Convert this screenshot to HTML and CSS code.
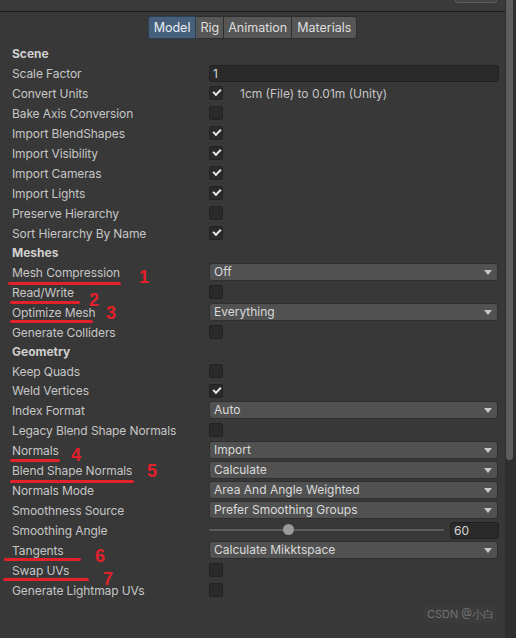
FILE: index.html
```html
<!DOCTYPE html>
<html>
<head>
<meta charset="utf-8">
<link rel="stylesheet" href="styles.css">
</head>
<body>
<div class="window">
  <div class="main">
    <div class="topbar"><div class="topbtn"></div></div>
    <div class="tabs">
      <div class="tab active">Model</div>
      <div class="tab">Rig</div>
      <div class="tab">Animation</div>
      <div class="tab">Materials</div>
    </div>
    <div class="list">
      <div class="hdr">Scene</div>
      <div class="row"><span class="lbl">Scale Factor</span><div class="field">1</div></div>
      <div class="row"><span class="lbl">Convert Units</span><div class="ctl"><span class="cb on"></span><span class="note">1cm (File) to 0.01m (Unity)</span></div></div>
      <div class="row"><span class="lbl">Bake Axis Conversion</span><div class="ctl"><span class="cb"></span></div></div>
      <div class="row"><span class="lbl">Import BlendShapes</span><div class="ctl"><span class="cb on"></span></div></div>
      <div class="row"><span class="lbl">Import Visibility</span><div class="ctl"><span class="cb on"></span></div></div>
      <div class="row"><span class="lbl">Import Cameras</span><div class="ctl"><span class="cb on"></span></div></div>
      <div class="row"><span class="lbl">Import Lights</span><div class="ctl"><span class="cb on"></span></div></div>
      <div class="row"><span class="lbl">Preserve Hierarchy</span><div class="ctl"><span class="cb"></span></div></div>
      <div class="row"><span class="lbl">Sort Hierarchy By Name</span><div class="ctl"><span class="cb on"></span></div></div>
      <div class="hdr">Meshes</div>
      <div class="row"><span class="lbl">Mesh Compression</span><div class="dd">Off</div></div>
      <div class="row"><span class="lbl">Read/Write</span><div class="ctl"><span class="cb"></span></div></div>
      <div class="row"><span class="lbl">Optimize Mesh</span><div class="dd">Everything</div></div>
      <div class="row"><span class="lbl">Generate Colliders</span><div class="ctl"><span class="cb"></span></div></div>
      <div class="hdr">Geometry</div>
      <div class="row"><span class="lbl">Keep Quads</span><div class="ctl"><span class="cb"></span></div></div>
      <div class="row short"><span class="lbl">Weld Vertices</span><div class="ctl"><span class="cb on"></span></div></div>
      <div class="row"><span class="lbl">Index Format</span><div class="dd">Auto</div></div>
      <div class="row"><span class="lbl">Legacy Blend Shape Normals</span><div class="ctl"><span class="cb"></span></div></div>
      <div class="row"><span class="lbl">Normals</span><div class="dd">Import</div></div>
      <div class="row"><span class="lbl">Blend Shape Normals</span><div class="dd">Calculate</div></div>
      <div class="row"><span class="lbl">Normals Mode</span><div class="dd">Area And Angle Weighted</div></div>
      <div class="row"><span class="lbl">Smoothness Source</span><div class="dd">Prefer Smoothing Groups</div></div>
      <div class="row"><span class="lbl">Smoothing Angle</span><div class="slider"><div class="track"><span class="thumb"></span></div><div class="num">60</div></div></div>
      <div class="row"><span class="lbl">Tangents</span><div class="dd">Calculate Mikktspace</div></div>
      <div class="row"><span class="lbl">Swap UVs</span><div class="ctl"><span class="cb"></span></div></div>
      <div class="row"><span class="lbl">Generate Lightmap UVs</span><div class="ctl"><span class="cb"></span></div></div>
    </div>
    <div class="wm">CSDN @小白</div>

    <span class="uline u1"></span><span class="num-r n1">1</span>
    <span class="uline u2"></span><span class="num-r n2">2</span>
    <span class="uline u3"></span><span class="num-r n3">3</span>
    <span class="uline u4"></span><span class="num-r n4">4</span>
    <span class="uline u5"></span><span class="num-r n5">5</span>
    <span class="uline u6"></span><span class="num-r n6">6</span>
    <span class="uline u7"></span><span class="num-r n7">7</span>
  </div>
  <div class="scroll"><div class="sthumb"></div></div>
</div>
</body>
</html>
```
FILE: styles.css
```css
html, body {
  margin: 0;
  padding: 0;
  background: #383838;
}
body {
  font-family: Inter, "Noto Sans", "Liberation Sans", sans-serif;
  font-size: 12px;
  color: #c8c8c8;
  width: 516px;
  height: 638px;
  overflow: hidden;
}
.window {
  display: flex;
  height: 638px;
}
.main {
  position: relative;
  flex: 1;
}
.topbar {
  height: 11px;
  border-bottom: 1px solid #1e1e1e;
  background: #3a3a3a;
  position: relative;
}
.topbtn {
  position: absolute;
  right: 8px;
  top: 0;
  width: 40px;
  height: 2px;
  border: 1px solid #5a5a5a;
  border-top: none;
  border-radius: 0 0 2px 2px;
  background: #444;
}
.tabs {
  display: flex;
  justify-content: center;
  margin-top: 4px;
}
.tab {
  height: 21px;
  line-height: 21px;
  padding: 0 4px;
  background: #565656;
  border: 1px solid #2e2e2e;
  border-left: none;
  color: #dedede;
  font-size: 12.5px;
}
.tab:first-child {
  border-left: 1px solid #2e2e2e;
  border-radius: 3px 0 0 3px;
  padding: 0 5px;
}
.tab:last-child {
  border-radius: 0 3px 3px 0;
  padding: 0 5px;
}
.tab.active {
  background: #46607c;
  border-color: #2d3f52;
  color: #e8eef5;
}
.list {
  padding-left: 12px;
  padding-top: 4px;
}
.hdr {
  height: 19px;
  line-height: 19px;
  font-weight: 700;
  color: #d0d0d0;
}
.list > .hdr:first-child {
  height: 20px;
  line-height: 21px;
}
.row {
  height: 20px;
  display: grid;
  grid-template-columns: 197px 290px;
  align-items: center;
}
.row.short { height: 19px; }
.lbl {
  color: #c6c6c6;
  white-space: nowrap;
  letter-spacing: -0.1px;
}
.ctl {
  display: flex;
  align-items: center;
  gap: 17px;
}
.cb {
  box-sizing: border-box;
  width: 14px;
  height: 14px;
  background: #2a2a2a;
  border: 1px solid #222;
  border-radius: 2px;
  position: relative;
}
.cb.on::after {
  content: "";
  position: absolute;
  left: 3px;
  top: 2px;
  width: 6px;
  height: 3px;
  border-left: 2px solid #eaeaea;
  border-bottom: 2px solid #eaeaea;
  transform: rotate(-45deg);
  transform-origin: center;
}
.note {
  color: #c6c6c6;
}
.field {
  box-sizing: border-box;
  height: 17px;
  line-height: 15px;
  background: #2a2a2a;
  border: 1px solid #212121;
  border-radius: 3px;
  padding-left: 3px;
  color: #d6d6d6;
}
.dd {
  box-sizing: border-box;
  height: 18px;
  line-height: 16px;
  background: #515151;
  border: 1px solid #2f2f2f;
  border-radius: 3px;
  padding-left: 4px;
  color: #dadada;
  position: relative;
  width: 289px;
}
.dd::after {
  content: "";
  position: absolute;
  right: 5px;
  top: 6px;
  border-left: 4px solid transparent;
  border-right: 4px solid transparent;
  border-top: 5px solid #c8c8c8;
}
.slider {
  display: flex;
  align-items: center;
  gap: 6px;
}
.track {
  position: relative;
  width: 235px;
  height: 2px;
  background: #5c5c5c;
  border-radius: 1px;
}
.thumb {
  position: absolute;
  left: 74px;
  top: -5px;
  width: 11px;
  height: 11px;
  border-radius: 50%;
  background: #9a9a9a;
}
.num {
  box-sizing: border-box;
  width: 49px;
  height: 17px;
  line-height: 15px;
  background: #2a2a2a;
  border: 1px solid #212121;
  border-radius: 3px;
  padding-left: 3px;
  color: #d6d6d6;
}
.scroll {
  width: 11px;
  background: #2f2f2f;
  position: relative;
}
.sthumb {
  position: absolute;
  left: 1px;
  width: 7px;
  top: 0;
  height: 460px;
  background: #5e5e5e;
  border-radius: 0 0 4px 4px;
}
.wm {
  position: absolute;
  right: 8px;
  top: 606px;
  font-size: 11px;
  color: #9a9a9a;
  opacity: 0.6;
  background: #3e3e3e;
  padding: 1px 3px;
}
.uline {
  position: absolute;
  height: 3px;
  background: #e2212b;
  border-radius: 2px;
}
.num-r {
  position: absolute;
  color: #e2212b;
  font-family: "Liberation Sans", Arial, sans-serif;
  font-weight: 700;
  font-size: 18px;
  line-height: 18px;
}
.u1 { left: 8px; top: 282px; width: 113px; }
.n1 { left: 139px; top: 268px; }
.u2 { left: 10px; top: 301px; width: 70px; }
.n2 { left: 89px; top: 291px; }
.u3 { left: 10px; top: 320px; width: 83px; }
.n3 { left: 106px; top: 304px; }
.u4 { left: 10px; top: 459px; width: 50px; }
.n4 { left: 71px; top: 446px; }
.u5 { left: 10px; top: 480px; width: 124px; }
.n5 { left: 147px; top: 462px; }
.u6 { left: 4px; top: 558px; width: 77px; }
.n6 { left: 95px; top: 547px; }
.u7 { left: 3px; top: 578px; width: 86px; }
.n7 { left: 103px; top: 570px; }
```
